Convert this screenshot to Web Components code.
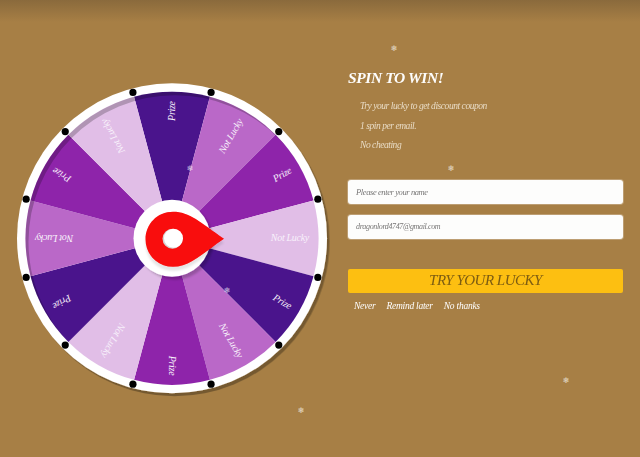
<!DOCTYPE html>
<html>
<head>
<meta charset="utf-8">
<title>Spin to win</title>
<style>
  html, body { margin: 0; height: 100%; }
  body { background: #a77f45; overflow: hidden; }
</style>
</head>
<body>
<spin-popup>
  <spin-wheel slot="wheel"></spin-wheel>
  <spin-form slot="form">
    <span slot="title">SPIN TO WIN!</span>
    <li slot="rules">Try your lucky to get discount coupon</li>
    <li slot="rules">1 spin per email.</li>
    <li slot="rules">No cheating</li>
    <spin-field slot="fields">Please enter your name</spin-field>
    <spin-field slot="fields" small>dragonlord4747@gmail.com</spin-field>
    <span slot="action">TRY YOUR LUCKY</span>
    <a slot="links">Never</a>
    <a slot="links">Remind later</a>
    <a slot="links">No thanks</a>
  </spin-form>
</spin-popup>
<snow-field></snow-field>
<script>
const SCRIPT_FONT = '"Liberation Serif", serif';

class SpinPopup extends HTMLElement {
  constructor() {
    super();
    this.attachShadow({ mode: 'open' });
    this.shadowRoot.innerHTML = `
      <style>
        :host {
          display: flex; box-sizing: border-box; width: 640px; height: 457px;
          padding: 78px 17px 0 12px; gap: 16px;
          background: linear-gradient(#8a6a3c 0, #a77f45 22px);
        }
        .form { flex: 1; }
      </style>
      <slot name="wheel"></slot>
      <div class="form"><slot name="form"></slot></div>
    `;
  }
}

class SpinWheel extends HTMLElement {
  constructor() {
    super();
    this.attachShadow({ mode: 'open' });
    this.shadowRoot.innerHTML = `
      <style>
        :host { display: block; width: 320px; height: 320px; }
        svg { display: block; overflow: visible; }
        text { font: italic 10px ${SCRIPT_FONT}; fill: #f8f1fb; letter-spacing: -.3px; }
      </style>
      <svg width="320" height="320" viewBox="-160 -160.3 320 320"></svg>
    `;
  }

  connectedCallback() {
    this._render();
  }

  _render() {
    const colors = ['#4a148c', '#ba68c8', '#8e24aa', '#e1bee7'];
    const pt = (r, deg) => {
      const a = (deg - 90) * Math.PI / 180;
      return `${(r * Math.cos(a)).toFixed(2)} ${(r * Math.sin(a)).toFixed(2)}`;
    };
    let wedges = '', labels = '', dots = '';
    for (let i = 0; i < 12; i++) {
      const mid = i * 30;
      wedges += `<path fill="${colors[i % 4]}" d="M0 0L${pt(146.5, mid - 15)}A146.5 146.5 0 0 1 ${pt(146.5, mid + 15)}Z"/>`;
      const name = i % 2 ? 'Not Lucky' : 'Prize';
      labels += `<text transform="rotate(${mid - 90})" x="137" y="3" text-anchor="end">${name}</text>`;
      const [dx, dy] = pt(151, mid + 15).split(' ');
      dots += `<circle cx="${dx}" cy="${dy}" r="3.6" fill="#000"/>`;
    }
    this.shadowRoot.querySelector('svg').innerHTML = `
      <defs>
        <filter id="ring" x="-10%" y="-10%" width="125%" height="125%"><feDropShadow dx="2.5" dy="3" stdDeviation=".7" flood-color="#000" flood-opacity=".3"/></filter>
        <filter id="hub" x="-30%" y="-30%" width="170%" height="170%"><feDropShadow dx="3" dy="3" stdDeviation="1.2" flood-color="#000" flood-opacity=".2"/></filter>
        <filter id="pin" x="-30%" y="-30%" width="170%" height="170%"><feDropShadow dx="0" dy="4" stdDeviation="1" flood-color="#000" flood-opacity=".1"/></filter>
        <filter id="soft"><feGaussianBlur stdDeviation=".6"/></filter>
        <clipPath id="face"><circle r="146.5"/></clipPath>
      </defs>
      <circle r="155" fill="#fff" filter="url(#ring)"/>
      ${wedges}
      <g clip-path="url(#face)">
        <path fill="#000" fill-opacity=".22" fill-rule="evenodd" filter="url(#soft)"
          d="M-170 -170H170V170H-170Z M149.5 3.5A146.5 146.5 0 1 0 -143.5 3.5A146.5 146.5 0 1 0 149.5 3.5Z"/>
      </g>
      ${labels}
      ${dots}
      <circle r="38.5" fill="#fff" filter="url(#hub)"/>
      <path fill="#f90808" filter="url(#pin)" d="M1 -26.5C18 -26.5 28 -16 52 .5C28 17 18 28.5 1 28.5C-15 28.5 -26.5 16 -26.5 1C-26.5 -14 -15 -26.5 1 -26.5Z"/>
      <circle cx=".5" cy=".5" r="10" fill="#d4d4d4"/>
      <circle cx="1.5" r="9.5" fill="#fff"/>
    `;
  }
}

class SpinField extends HTMLElement {
  constructor() {
    super();
    this.attachShadow({ mode: 'open' });
    this.shadowRoot.innerHTML = `
      <style>
        :host {
          display: flex; align-items: center; box-sizing: border-box; height: 24px;
          padding-left: 8px; background: #fff; border-radius: 3px;
          box-shadow: 0 0 0 1px rgba(255,255,255,.25);
          font: italic 8.5px ${SCRIPT_FONT}; color: #777; letter-spacing: -.4px;
        }
        :host([small]) { font-size: 8px; letter-spacing: -.37px; }
      </style>
      <slot></slot>
    `;
  }
}

class SpinForm extends HTMLElement {
  constructor() {
    super();
    this.attachShadow({ mode: 'open' });
    this.shadowRoot.innerHTML = `
      <style>
        :host { display: block; font: italic 9.5px ${SCRIPT_FONT}; color: #fff; opacity: .99; }
        .title { font-size: 15.5px; font-weight: bold; line-height: 20px; margin-top: -10px; letter-spacing: -.4px; }
        ul { list-style: none; margin: 9px 0 0; padding: 0 0 0 12px; color: #e9dcc6; letter-spacing: -.45px; }
        ::slotted(li) { height: 19.5px; line-height: 19px; }
        .fields { display: flex; flex-direction: column; gap: 11px; margin-top: 24px; }
        .action {
          display: flex; align-items: center; justify-content: center; height: 24px; margin-top: 30px;
          background: #ffc011; border-radius: 2px; color: #7c5c12; font-size: 15px; letter-spacing: -.5px;
        }
        .links { display: flex; gap: 11px; margin: 7px 0 0 6px; font-size: 9.5px; line-height: 13px; letter-spacing: -.25px; }
      </style>
      <div class="title"><slot name="title"></slot></div>
      <ul><slot name="rules"></slot></ul>
      <div class="fields"><slot name="fields"></slot></div>
      <div class="action"><slot name="action"></slot></div>
      <div class="links"><slot name="links"></slot></div>
    `;
  }
}

class SnowField extends HTMLElement {
  constructor() {
    super();
    this.attachShadow({ mode: 'open' });
    const flakes = [[394, 49], [451, 169], [190, 169], [227, 291], [566, 381], [301, 411]];
    this.shadowRoot.innerHTML = `
      <style>
        :host { position: absolute; left: 0; top: 0; width: 640px; height: 457px; pointer-events: none; }
        span {
          position: absolute; width: 10px; height: 10px; margin: -5px 0 0 -5px;
          font: 8px/10px "DejaVu Sans", sans-serif; text-align: center; color: rgba(255,255,255,.75);
        }
      </style>
      ${flakes.map(([x, y]) => `<span style="left:${x}px;top:${y}px">❄</span>`).join('')}
    `;
  }
}

customElements.define('spin-popup', SpinPopup);
customElements.define('spin-wheel', SpinWheel);
customElements.define('spin-field', SpinField);
customElements.define('spin-form', SpinForm);
customElements.define('snow-field', SnowField);
</script>
</body>
</html>
